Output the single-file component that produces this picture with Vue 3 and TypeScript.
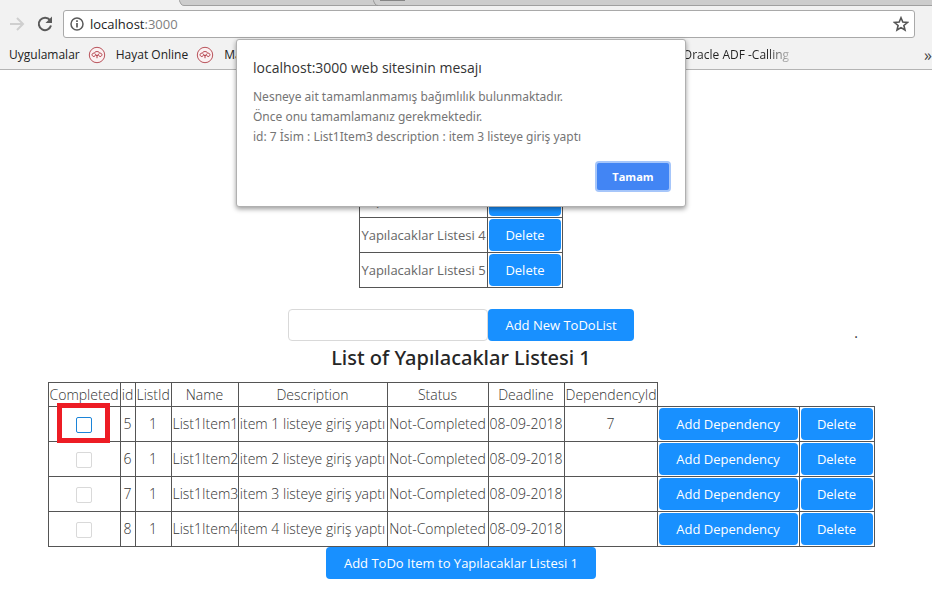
<script setup lang="ts">
import { ref } from 'vue'

interface TodoItem {
  id: number
  listId: number
  name: string
  description: string
  status: string
  deadline: string
  dependencyId: number | null
  completed: boolean
}

const address = ref('localhost:3000')
const newListName = ref('')
const dialogOpen = ref(true)

const lists = [3, 4, 5].map((n) => ({ id: n, name: `Yapılacaklar Listesi ${n}` }))

const columns = ['Completed', 'id', 'ListId', 'Name', 'Description', 'Status', 'Deadline', 'DependencyId']

const items = ref<TodoItem[]>(
  [5, 6, 7, 8].map((id, i) => ({
    id,
    listId: 1,
    name: `List1Item${i + 1}`,
    description: `item ${i + 1} listeye giriş yaptı`,
    status: 'Not-Completed',
    deadline: '08-09-2018',
    dependencyId: i === 0 ? 7 : null,
    completed: false,
  })),
)
</script>

<template>
  <div class="window">
    <header class="chrome">
      <div class="tabs">
        <svg class="tab-edge" width="10" height="6" viewBox="0 0 10 6" aria-hidden="true">
          <path d="M0 0 L2 4 Q3 5.500 5 5.500 H10 V0 Z" fill="#cdcdcd" />
          <path d="M0 0 L2 4 Q3 5.500 5 5.500 H10" fill="none" stroke="#a0a0a0" />
        </svg>
        <svg class="tab-edge next" width="34" height="6" viewBox="0 0 34 6" aria-hidden="true">
          <path d="M0 0 L2 4 Q3 5.500 5 5.500" fill="none" stroke="#999" />
          <path d="M7 0 H32" stroke="#858585" stroke-width="2" />
        </svg>
      </div>
      <div class="toolbar">
        <button class="icon-button" type="button" aria-label="İleri">
          <svg width="16" height="16" viewBox="0 0 16 16">
            <path d="M1 8 H14 M8 2 L14 8 L8 14" fill="none" stroke="#cfcfcf" stroke-width="2" />
          </svg>
        </button>
        <button class="icon-button" type="button" aria-label="Yenile">
          <svg width="16" height="16" viewBox="0 0 16 16">
            <path d="M13 4.200 A6.200 6.200 0 1 0 14 9.600" fill="none" stroke="#5a5a5a" stroke-width="2" />
            <path d="M15 0.500 V7 H8.500 Z" fill="#5a5a5a" />
          </svg>
        </button>
        <div class="omnibox">
          <svg width="14" height="14" viewBox="0 0 14 14" aria-hidden="true">
            <circle cx="7" cy="7" r="6" fill="none" stroke="#5a5a5a" stroke-width="1.500" />
            <path d="M7 6 V10.500 M7 3.200 V4.900" stroke="#5a5a5a" stroke-width="1.700" />
          </svg>
          <div class="address" role="textbox" aria-label="Adres">
            {{ address.split(':')[0] }}<span class="port">:{{ address.split(':')[1] }}</span>
          </div>
          <button class="icon-button" type="button" aria-label="Yer işareti">
            <svg width="16" height="16" viewBox="0 0 16 16">
              <path d="M8 1.800 L9.800 6.100 L14.400 6.500 L10.900 9.500 L12 14 L8 11.600 L4 14 L5.100 9.500 L1.600 6.500 L6.200 6.100 Z" fill="none" stroke="#555" stroke-width="1.600" />
            </svg>
          </button>
        </div>
      </div>
      <nav class="bookmarks">
        <a href="#">Uygulamalar</a>
        <a v-for="label in ['Hayat Online', 'Ma']" :key="label" href="#" class="with-icon">
          <svg width="18" height="18" viewBox="0 0 18 18" aria-hidden="true">
            <circle cx="9" cy="9" r="7.700" fill="#fbf1f2" stroke="#b9525a" />
            <path d="M4.800 10.200 C3.200 8.600 4.400 6.900 6.300 7.200 C7 5 11 5 11.700 7.200 C13.600 6.900 14.800 8.600 13.200 10.200 C11.800 11 10.800 10.200 10.700 9 M4.800 10.200 C6.200 11 7.200 10.200 7.300 9 M7 7.600 L9 10 L11 7.600 M9 10 V12.200" fill="none" stroke="#b23a45" />
          </svg>
          {{ label }}
        </a>
        <a href="#" class="fading">Oracle ADF -Calling</a>
        <button class="more" type="button">»</button>
      </nav>
    </header>

    <main class="page">
      <table class="grid lists">
        <colgroup><col class="w-list" /><col class="w-delete" /></colgroup>
        <tbody>
          <tr v-for="list in lists" :key="list.id">
            <td>{{ list.name }}</td>
            <td class="action"><button class="primary" type="button">Delete</button></td>
          </tr>
        </tbody>
      </table>

      <div class="add-row">
        <form class="add-list" @submit.prevent>
          <input v-model="newListName" class="text-input" type="text" aria-label="Add New ToDoList" />
          <button class="primary add-list-button" type="submit">Add New ToDoList</button>
        </form>
        <span class="dot">.</span>
      </div>

      <h2>List of Yapılacaklar Listesi 1</h2>

      <table class="grid items">
        <colgroup>
          <col class="w-completed" /><col class="w-id" /><col class="w-listid" /><col class="w-name" />
          <col class="w-description" /><col class="w-status" /><col class="w-deadline" />
          <col class="w-dependency" /><col class="w-add" /><col class="w-delete" />
        </colgroup>
        <thead>
          <tr>
            <th v-for="column in columns" :key="column" scope="col">{{ column }}</th>
          </tr>
        </thead>
        <tbody>
          <tr v-for="(item, index) in items" :key="item.id">
            <td class="check-cell">
              <input
                v-model="item.completed"
                class="check"
                :class="{ active: index === 0 }"
                type="checkbox"
                :aria-label="item.name"
              />
              <span v-if="index === 0" class="marker"></span>
            </td>
            <td>{{ item.id }}</td>
            <td>{{ item.listId }}</td>
            <td>{{ item.name }}</td>
            <td>{{ item.description }}</td>
            <td>{{ item.status }}</td>
            <td>{{ item.deadline }}</td>
            <td>{{ item.dependencyId }}</td>
            <td class="action"><button class="primary" type="button">Add Dependency</button></td>
            <td class="action"><button class="primary" type="button">Delete</button></td>
          </tr>
        </tbody>
      </table>

      <button class="primary add-item" type="button">Add ToDo Item to Yapılacaklar Listesi 1</button>
    </main>

    <div v-if="dialogOpen" class="alert" role="alertdialog" aria-labelledby="alert-title">
      <h1 id="alert-title">localhost:3000 web sitesinin mesajı</h1>
      <p>
        Nesneye ait tamamlanmamış bağımlılık bulunmaktadır.<br />
        Önce onu tamamlamanız gerekmektedir.<br />
        id: 7 İsim : List1Item3 description : item 3 listeye giriş yaptı
      </p>
      <button class="ok" type="button" @click="dialogOpen = false">Tamam</button>
    </div>
  </div>
</template>

<style>
body {
  margin: 0;
  background: #fff;
}
</style>

<style scoped>
.window {
  position: relative;
  min-height: 100vh;
  overflow: hidden;
  font-family: 'Open Sans', 'Noto Sans', sans-serif;
  font-size: 14px;
}

.window * {
  box-sizing: border-box;
}

button {
  font-family: inherit;
  cursor: pointer;
}

.chrome {
  display: flex;
  flex-direction: column;
  height: 70px;
  background: #f2f2f2;
  border-bottom: 1px solid #b4b4b4;
}

.tabs {
  position: relative;
  height: 6px;
  margin-left: 188px;
  background: #cdcdcd;
  border-bottom: 1px solid #a0a0a0;
}

.tab-edge {
  position: absolute;
  top: 0;
  left: -9px;
}

.tab-edge.next {
  left: 185px;
}

.toolbar {
  display: flex;
  align-items: center;
  gap: 12px;
  height: 36px;
  padding: 0 17px 0 9px;
}

.icon-button {
  display: flex;
  padding: 0;
  background: none;
  border: 0;
}

.omnibox {
  display: flex;
  flex: 1;
  align-items: center;
  gap: 6px;
  height: 28px;
  margin-left: -2px;
  padding: 0 5px 0 6px;
  background: #fff;
  border: 1px solid #a9a9a9;
  border-radius: 3px;
}

.address {
  flex: 1;
  font-size: 13px;
  color: #222;
}

.port {
  color: #808080;
}

.bookmarks {
  display: flex;
  flex: 1;
  align-items: center;
  gap: 8px;
  padding: 0 0 2px 9px;
  font-size: 12px;
}

.bookmarks a {
  color: #222;
  text-decoration: none;
  white-space: nowrap;
}

.bookmarks .with-icon {
  display: flex;
  align-items: center;
  gap: 10px;
}

.bookmarks .fading {
  margin-left: auto;
  color: transparent;
  background: linear-gradient(90deg, #222 80%, #bbb);
  background-clip: text;
}

.more {
  margin-left: 127px;
  padding: 0;
  color: #444;
  background: none;
  border: 0;
  font-size: 16px;
}

.page {
  display: flex;
  flex-direction: column;
  align-items: center;
  padding: 112px 10px 0 0;
}

.grid {
  border-collapse: collapse;
  table-layout: fixed;
  color: #333;
  font-weight: 300;
  text-align: center;
  white-space: nowrap;
}

.lists {
  width: 204px;
}

.items {
  width: 827px;
}

.grid th,
.grid td {
  height: 35px;
  padding: 1px;
  border: 1px solid #555;
  font-weight: 300;
  line-height: 20px;
}

.grid th {
  height: 24px;
}

.lists td {
  color: #666;
  font-size: 13px;
  font-weight: 400;
}

.w-completed { width: 72px; }
.w-id { width: 15px; }
.w-listid { width: 36px; }
.w-name { width: 67px; }
.w-description { width: 149px; }
.w-status { width: 101px; }
.w-deadline { width: 76px; }
.w-dependency { width: 93px; }
.w-add { width: 142px; }
.w-delete { width: 75px; }
.w-list { width: 128px; }

.primary {
  display: block;
  width: 100%;
  height: 32px;
  padding: 0;
  color: #fff;
  background: #1890ff;
  border: 0;
  border-radius: 4px;
  font-size: 13px;
  white-space: nowrap;
}

.add-row {
  display: grid;
  grid-template-columns: 1fr auto 1fr;
  align-self: stretch;
  margin-top: 21px;
}

.add-list {
  display: flex;
  grid-column: 2;
}

.text-input {
  width: 200px;
  height: 32px;
  padding: 4px 11px;
  border: 1px solid #d9d9d9;
  border-radius: 4px;
  font: inherit;
}

.add-list-button {
  width: 146px;
}

.dot {
  align-self: end;
  padding-right: 64px;
  color: #333;
  line-height: 16px;
  text-align: right;
}

h2 {
  margin: 0;
  padding: 3px 0 10px;
  color: #262626;
  font-family: 'Noto Sans', sans-serif;
  font-size: 20px;
  font-weight: 500;
  line-height: 28px;
}

.check-cell {
  position: relative;
}

.check {
  display: block;
  width: 16px;
  height: 16px;
  margin: 2px auto 0;
  appearance: none;
  background: #fff;
  border: 1px solid #d9d9d9;
  border-radius: 2px;
}

.check.active {
  border-color: #1c84d8;
}

.check:checked {
  background: #1890ff;
}

.marker {
  position: absolute;
  inset: -4px 10px -2px 8px;
  border: 5px solid #ed1c24;
  pointer-events: none;
}

.add-item {
  width: 270px;
}

.alert {
  position: absolute;
  top: 39px;
  left: calc(50% - 230px);
  display: flex;
  flex-direction: column;
  width: 450px;
  padding: 18px 16px;
  background: #fff;
  border: 1px solid #b0b0b0;
  border-radius: 3px;
  box-shadow: 0 2px 5px rgba(0, 0, 0, 0.4);
  padding-bottom: 16px;
}

.alert h1 {
  margin: 0 0 9px;
  color: #333;
  font-size: 14px;
  font-weight: 400;
  line-height: 20px;
}

.alert p {
  margin: 0;
  color: #757575;
  font-family: 'Noto Sans', sans-serif;
  font-size: 12px;
  line-height: 20px;
}

.ok {
  align-self: flex-end;
  width: 72px;
  height: 27px;
  margin-top: 16px;
  padding: 0 0 1px;
  color: #fff;
  background: #4285f4;
  border: 0;
  border-radius: 2px;
  box-shadow: 0 0 0 2px #a6c6fa;
  font-size: 11px;
  font-weight: 700;
}
</style>
